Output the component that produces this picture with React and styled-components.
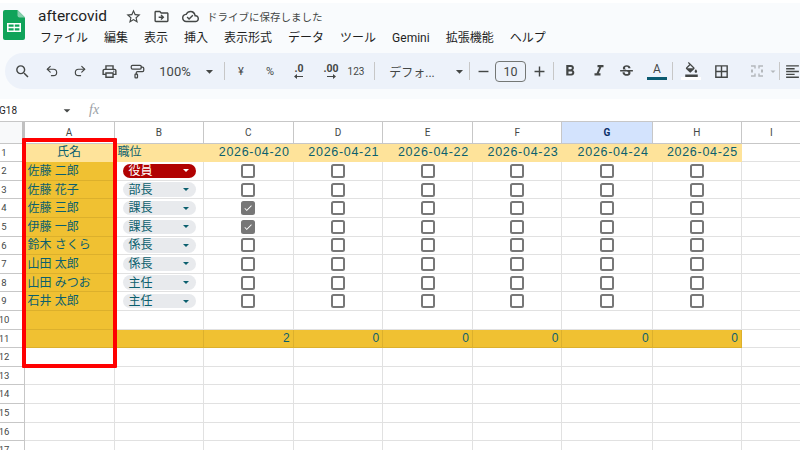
import styled, { createGlobalStyle } from "styled-components";
import { Undo2, Redo2, PaintRoller } from "lucide-react";
import {
  MdSearch, MdOutlinePrint, MdStarBorder,
  MdOutlineDriveFileMove, MdOutlineCloudDone, MdArrowDropDown, MdRemove, MdAdd,
  MdFormatBold, MdFormatItalic, MdStrikethroughS, MdOutlineFormatColorFill, MdBorderAll,
  MdFormatAlignLeft, MdCheck,
} from "react-icons/md";

const Global = createGlobalStyle`
  html, body { margin: 0; height: 450px; overflow: hidden; background: #fff; }
  body { font-family: Roboto, "Noto Sans CJK JP", sans-serif; }
`;

const Page = styled.div`
  position: relative;
  width: 800px;
  height: 450px;
  overflow: hidden;
  background: #fff;
`;
const Chrome = styled.div`
  height: 96px;
  margin-top: 3px;
  background: #f9fbfd;
  display: flex;
  flex-direction: column;
`;
const TitleBar = styled.div`
  height: 50px;
  display: flex;
  padding-left: 3px;
`;
const LogoBox = styled.div`
  width: 22px;
  padding-top: 7px;
  margin-right: 13px;
`;
const TitleBlock = styled.div`
  display: flex;
  flex-direction: column;
`;
const TitleRow = styled.div`
  display: flex;
  align-items: center;
  height: 26px;
  color: #3c4043;
`;
const DocName = styled.span`
  font-size: 15.5px;
  width: 87px;
  color: #1f1f1f;
`;
const TitleIcon = styled.span`
  display: flex;
  width: ${(p) => p.$w}px;
  font-size: 17px;
  color: #444746;
`;
const Saved = styled.span`
  font-size: 10.5px;
  color: #444746;
  white-space: nowrap;
`;
const MenuRow = styled.div`
  display: flex;
  gap: 16px;
  height: 18px;
  align-items: center;
  margin-left: 2px;
`;
const MenuItem = styled.span`
  font-size: 12px;
  line-height: 1;
  color: #1f1f1f;
  white-space: nowrap;
`;
const Toolbar = styled.div`
  height: 36px;
  margin-left: 5px;
  width: 830px;
  padding-left: 3px;
  background: #edf2fa;
  border-radius: 18px 0 0 18px;
  display: flex;
  align-items: center;
`;
const Tool = styled.span`
  flex: none;
  width: ${(p) => p.$w}px;
  margin-left: ${(p) => p.$ml || 0}px;
  display: flex;
  justify-content: center;
  align-items: center;
  font-size: ${(p) => p.$size || 17}px;
  color: ${(p) => p.$color || "#444746"};
  white-space: nowrap;
`;
const Divider = styled.span`
  flex: none;
  width: 1px;
  height: 18px;
  background: #c7c7c7;
`;
const SizeBox = styled.span`
  flex: none;
  width: 31px;
  height: 21px;
  margin: 0 -1px;
  box-sizing: border-box;
  border: 1px solid #747775;
  border-radius: 4px;
  display: flex;
  align-items: center;
  justify-content: center;
  font-size: 12.5px;
  color: #444746;
`;
const ColorA = styled.span`
  display: flex;
  flex-direction: column;
  align-items: center;
  width: 20px;
  font-size: 12px;
  line-height: 13px;
  color: #444746;
  &::after {
    content: "";
    width: 20px;
    height: 3px;
    background: #0b5a70;
    margin-top: 1px;
  }
`;
const FillIcon = styled.span`
  display: flex;
  flex-direction: column;
  align-items: center;
  font-size: 15px;
  &::after {
    content: "";
    width: 20px;
    height: 3px;
    background: #fff;
  }
`;
const DecimalMark = styled.span`
  display: flex;
  flex-direction: column;
  align-items: center;
  font-size: 10.5px;
  font-weight: 700;
  line-height: 10px;
  color: #444746;
`;
const FormulaBar = styled.div`
  height: 22px;
  display: flex;
  align-items: center;
  background: #fff;
`;
const NameBox = styled.span`
  font-size: 10px;
  color: #1f1f1f;
  width: 60px;
  margin-left: -1px;
`;
const Fx = styled.span`
  font-family: "Liberation Serif", serif;
  font-style: italic;
  font-size: 14px;
  color: #9aa0a6;
  margin-left: 14px;
`;

const Sheet = styled.div`
  border-top: 1px solid #c7c7c7;
`;
const Row = styled.div`
  display: grid;
  grid-template-columns: 24.5px 90px 89.5px 89.7px 89.6px 89.6px 89.6px 90.1px 89.3px 60px;
  grid-template-rows: ${(p) => p.$h || 18.6}px;
  height: ${(p) => p.$h || 18.6}px;
`;
const Corner = styled.div`
  background: #f8f9fa;
  border-bottom: 1px solid #c7c7c7;
  box-sizing: border-box;
  border-right: 3.5px solid #c0c0c0;
`;
const ColHead = styled.div`
  display: flex;
  align-items: center;
  justify-content: center;
  box-sizing: border-box;
  font-size: 10px;
  color: ${(p) => (p.$active ? "#0b2f66" : "#444746")};
  font-weight: ${(p) => (p.$active ? 700 : 400)};
  background: ${(p) => (p.$active ? "#d3e3fd" : "#fff")};
  border-right: 1px solid #c7c7c7;
  border-bottom: 1px solid #c7c7c7;
`;
const RowHead = styled.div`
  box-sizing: border-box;
  width: 24.5px;
  border-right: 1px solid #c7c7c7;
  border-bottom: 1px solid #c7c7c7;
  background: #fff;
  display: flex;
  align-items: center;
`;
const RowNum = styled.span`
  width: 8px;
  display: flex;
  justify-content: center;
  font-size: 9.5px;
  line-height: 1;
  color: #444746;
  white-space: nowrap;
`;
const tone = {
  plain: { bg: "#fff", line: "#e1e1e1" },
  light: { bg: "#fee39a", line: "#fee39a" },
  gold: { bg: "#f0c132", line: "#dcb02c" },
};
const Cell = styled.div`
  box-sizing: border-box;
  min-width: 0;
  min-height: 0;
  overflow: hidden;
  display: flex;
  align-items: center;
  justify-content: ${(p) => p.$align || "flex-start"};
  padding: 0 3px;
  font-family: "Liberation Sans", "Noto Sans CJK JP", sans-serif;
  font-size: 12px;
  line-height: 1;
  color: #0b5f6e;
  white-space: nowrap;
  background: ${(p) => tone[p.$tone || "plain"].bg};
  border-right: 1px solid ${(p) => tone[p.$tone || "plain"].line};
  border-bottom: 1px solid ${(p) => tone[p.$tone || "plain"].line};
`;
const DateText = styled.span`
  font-size: 12.5px;
  letter-spacing: 0.7px;
`;
const Pill = styled.div`
  width: 73px;
  height: 14.5px;
  margin-left: 5px;
  border-radius: 8px;
  padding: 0 7px 0 6px;
  box-sizing: border-box;
  display: flex;
  align-items: center;
  justify-content: space-between;
  font-size: 12px;
  color: ${(p) => (p.$red ? "#fff" : "#0b5f6e")};
  background: ${(p) => (p.$red ? "#b10202" : "#e8eaed")};
  &::after {
    content: "";
    border-left: 3.5px solid transparent;
    border-right: 3.5px solid transparent;
    border-top: 3.5px solid ${(p) => (p.$red ? "#fff" : "#0b5f6e")};
  }
`;
const Check = styled.div`
  width: 14px;
  height: 14px;
  flex: none;
  box-sizing: border-box;
  border: 2px solid #777;
  border-radius: 2.5px;
  display: flex;
  align-items: center;
  justify-content: center;
  color: #fff;
  font-size: 12px;
  background: ${(p) => (p.$on ? "#777" : "#fff")};
`;
const Highlight = styled.div`
  position: absolute;
  left: 21.5px;
  top: 138px;
  width: 95px;
  height: 229.5px;
  box-sizing: border-box;
  border: 4.5px solid #ff0000;
  border-radius: 1px;
  pointer-events: none;
`;

const SheetsLogo = () => (
  <svg width="22" height="30" viewBox="0 0 22 30">
    <path d="M2 0h12.5L22 7.500V28a2 2 0 0 1-2 2H2a2 2 0 0 1-2-2V2a2 2 0 0 1 2-2z" fill="#10a35a" />
    <path d="M14.500 0L22 7.500h-5.500a2 2 0 0 1-2-2z" fill="#87ceac" />
    <path d="M4 13h14v9H4z M5.600 14.600v2.200h5v-2.200z M11.800 14.600v2.200h4.600v-2.200z M5.600 18.200v2.200h5v-2.200z M11.800 18.200v2.200h4.600v-2.200z" fill="#fff" fillRule="evenodd" />
  </svg>
);

const MergeIcon = () => (
  <svg width="14" height="14" viewBox="0 0 14 14" fill="none" stroke="#b4b8bc" strokeWidth="1.400">
    <path d="M1 2h4v2.500M13 2H9v2.500M1 12h4V9.500M13 12H9V9.500M1 6.200h2M1 7.800h2M11 6.200h2M11 7.800h2" />
  </svg>
);

const TinyArrow = ({ right }) => (
  <svg width="9" height="5" viewBox="0 0 9 5" fill="#444746">
    {right ? <path d="M0 2h6V0l3 2.500L6 5V3H0z" /> : <path d="M9 2H3V0L0 2.500 3 5V3h6z" />}
  </svg>
);

const menus = ["ファイル", "編集", "表示", "挿入", "表示形式", "データ", "ツール", "Gemini", "拡張機能", "ヘルプ"];
const cols = ["A", "B", "C", "D", "E", "F", "G", "H", "I"];
const dates = ["2026-04-20", "2026-04-21", "2026-04-22", "2026-04-23", "2026-04-24", "2026-04-25"];
const people = [
  { name: "佐藤 二郎", role: "役員", red: true },
  { name: "佐藤 花子", role: "部長" },
  { name: "佐藤 三郎", role: "課長", done: true },
  { name: "伊藤 一郎", role: "課長", done: true },
  { name: "鈴木 さくら", role: "係長" },
  { name: "山田 太郎", role: "係長" },
  { name: "山田 みつお", role: "主任" },
  { name: "石井 太郎", role: "主任" },
];
const totals = [2, 0, 0, 0, 0, 0];

export default function App() {
  return (
    <Page>
      <Global />
      <Chrome>
        <TitleBar>
          <LogoBox><SheetsLogo /></LogoBox>
          <TitleBlock>
            <TitleRow>
              <DocName>aftercovid</DocName>
              <TitleIcon $w={28}><MdStarBorder /></TitleIcon>
              <TitleIcon $w={29}><MdOutlineDriveFileMove /></TitleIcon>
              <TitleIcon $w={25}><MdOutlineCloudDone /></TitleIcon>
              <Saved>ドライブに保存しました</Saved>
            </TitleRow>
            <MenuRow>
              {menus.map((m) => <MenuItem key={m}>{m}</MenuItem>)}
            </MenuRow>
          </TitleBlock>
        </TitleBar>
        <Toolbar>
          <Tool $w={28}><MdSearch /></Tool>
          <Tool $w={32}><Undo2 size={14} strokeWidth={2} /></Tool>
          <Tool $w={24}><Redo2 size={14} strokeWidth={2} /></Tool>
          <Tool $w={34}><MdOutlinePrint /></Tool>
          <Tool $w={22}><PaintRoller size={15} strokeWidth={2} /></Tool>
          <Tool $w={44} $size={13} $ml={5}>100%</Tool>
          <Tool $w={21} $ml={2}><MdArrowDropDown /></Tool>
          <Tool $w={4} />
          <Divider />
          <Tool $w={32} $size={11}>¥</Tool>
          <Tool $w={26} $size={11}>%</Tool>
          <Tool $w={32}><DecimalMark>.0<TinyArrow /></DecimalMark></Tool>
          <Tool $w={32}><DecimalMark>.00<TinyArrow right /></DecimalMark></Tool>
          <Tool $w={18} $size={10}>123</Tool>
          <Tool $w={9} />
          <Divider />
          <Tool $w={74} $size={12}>デフォ...</Tool>
          <Tool $w={20}><MdArrowDropDown /></Tool>
          <Divider />
          <Tool $w={26}><MdRemove /></Tool>
          <SizeBox>10</SizeBox>
          <Tool $w={28}><MdAdd /></Tool>
          <Divider />
          <Tool $w={32} $size={18}><MdFormatBold /></Tool>
          <Tool $w={25} $size={18}><MdFormatItalic /></Tool>
          <Tool $w={31} $size={17}><MdStrikethroughS /></Tool>
          <Tool $w={30}><ColorA>A</ColorA></Tool>
          <Divider />
          <Tool $w={36}><FillIcon><MdOutlineFormatColorFill /></FillIcon></Tool>
          <Tool $w={24}><MdBorderAll /></Tool>
          <Tool $w={44} $ml={2}><MergeIcon /></Tool>
          <Tool $w={12} $ml={-12} $color="#b4b8bc"><MdArrowDropDown /></Tool>
          <Divider />
          <Tool $w={24}><MdFormatAlignLeft /></Tool>
        </Toolbar>
      </Chrome>
      <FormulaBar>
        <NameBox>G18</NameBox>
        <Tool $w={16}><MdArrowDropDown /></Tool>
        <Fx>fx</Fx>
      </FormulaBar>
      <Sheet>
        <Row $h={21.6}>
          <Corner />
          {cols.map((c) => <ColHead key={c} $active={c === "G"}>{c}</ColHead>)}
        </Row>
        <Row>
          <RowHead><RowNum>1</RowNum></RowHead>
          <Cell $tone="light" $align="center">氏名</Cell>
          <Cell $tone="light">職位</Cell>
          {dates.map((d) => <Cell key={d} $tone="light" $align="flex-end"><DateText>{d}</DateText></Cell>)}
          <Cell />
          <Cell />
        </Row>
        {people.map((p, i) => (
          <Row key={p.name}>
            <RowHead><RowNum>{i + 2}</RowNum></RowHead>
            <Cell $tone="gold">{p.name}</Cell>
            <Cell><Pill $red={p.red}>{p.role}</Pill></Cell>
            {dates.map((d, j) => (
              <Cell key={d} $align="center">
                <Check $on={p.done && j === 0}>{p.done && j === 0 ? <MdCheck /> : null}</Check>
              </Cell>
            ))}
            <Cell />
            <Cell />
          </Row>
        ))}
        <Row>
          <RowHead><RowNum>10</RowNum></RowHead>
          <Cell $tone="gold" />
          {cols.slice(1).map((c) => <Cell key={c} />)}
          <Cell />
        </Row>
        <Row>
          <RowHead><RowNum>11</RowNum></RowHead>
          <Cell $tone="gold" />
          <Cell $tone="gold" />
          {totals.map((t, i) => <Cell key={i} $tone="gold" $align="flex-end">{t}</Cell>)}
          <Cell />
          <Cell />
        </Row>
        {[12, 13, 14, 15, 16, 17].map((n) => (
          <Row key={n}>
            <RowHead><RowNum>{n}</RowNum></RowHead>
            {cols.map((c) => <Cell key={c} />)}
            <Cell />
          </Row>
        ))}
      </Sheet>
      <Highlight />
    </Page>
  );
}
